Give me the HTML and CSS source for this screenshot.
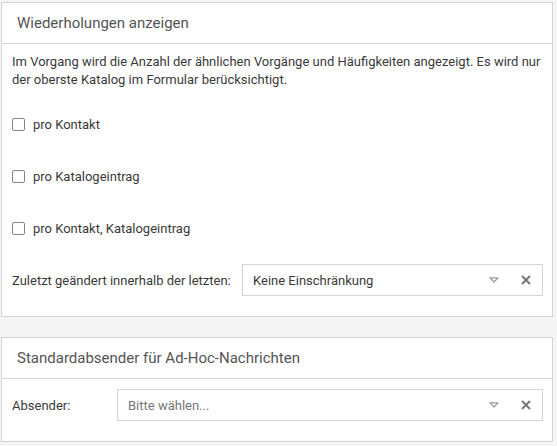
FILE: index.html
```html
<!DOCTYPE html>
<html lang="de">
<head>
<meta charset="utf-8">
<title>Einstellungen</title>
<link rel="stylesheet" href="styles.css">
</head>
<body>
<section class="panel">
  <div class="panel-head">Wiederholungen anzeigen</div>
  <div class="panel-body body-main">
    <p class="desc">Im Vorgang wird die Anzahl der ähnlichen Vorgänge und Häufigkeiten angezeigt. Es wird nur der oberste Katalog im Formular berücksichtigt.</p>
    <div class="checks">
      <label class="check"><input type="checkbox" class="box"><span>pro Kontakt</span></label>
      <label class="check"><input type="checkbox" class="box"><span>pro Katalogeintrag</span></label>
      <label class="check"><input type="checkbox" class="box"><span>pro Kontakt, Katalogeintrag</span></label>
    </div>
    <div class="field field-wide">
      <span class="field-label">Zuletzt geändert innerhalb der letzten:</span>
      <div class="select">
        <span class="select-value">Keine Einschränkung</span>
        <svg class="caret" width="10" height="6" viewBox="0 0 10 6"><path d="M1 0.8 H9 L5 5 Z" fill="none" stroke="#9a9a9a" stroke-width="1.2" stroke-linejoin="round"/></svg>
        <svg class="clear" width="10" height="10" viewBox="0 0 10 10"><path d="M1 1 L9 9 M9 1 L1 9" stroke="#777" stroke-width="2"/></svg>
      </div>
    </div>
  </div>
</section>
<section class="panel panel-second">
  <div class="panel-head">Standardabsender für Ad-Hoc-Nachrichten</div>
  <div class="panel-body body-short">
    <div class="field field-narrow">
      <span class="field-label">Absender:</span>
      <div class="select">
        <span class="select-value placeholder">Bitte wählen...</span>
        <svg class="caret" width="10" height="6" viewBox="0 0 10 6"><path d="M1 0.8 H9 L5 5 Z" fill="none" stroke="#9a9a9a" stroke-width="1.2" stroke-linejoin="round"/></svg>
        <svg class="clear" width="10" height="10" viewBox="0 0 10 10"><path d="M1 1 L9 9 M9 1 L1 9" stroke="#777" stroke-width="2"/></svg>
      </div>
    </div>
  </div>
</section>
</body>
</html>
```
FILE: styles.css
```css
html, body {
  margin: 0;
  padding: 0;
  background: #f5f5f5;
}
body {
  padding: 2px 5px 0 1px;
  font-family: Roboto, "Liberation Sans", Arial, sans-serif;
  font-size: 13px;
  color: #3a3a3a;
}
.panel {
  background: #fff;
  border: 1px solid #d4d4d4;
  width: 550px;
  box-sizing: content-box;
}
.panel-second {
  margin-top: 20px;
}
.panel-head {
  height: 40px;
  line-height: 40px;
  padding-left: 15px;
  font-size: 15px;
  color: #555;
  border-bottom: 1px solid #d4d4d4;
}
.panel-body {
  padding: 0 9px 20px 10px;
}
.body-main {
  padding-top: 9px;
}
.body-short {
  padding-top: 10px;
}
.desc {
  margin: 0;
  line-height: 18px;
}
.checks {
  display: flex;
  flex-direction: column;
  gap: 34px;
  margin-top: 26px;
}
.check {
  display: flex;
  align-items: center;
  height: 18px;
  gap: 8px;
}
.box {
  appearance: none;
  -webkit-appearance: none;
  margin: 0;
  width: 13px;
  height: 13px;
  border: 1px solid #858585;
  border-radius: 2px;
  background: #fff;
  box-sizing: border-box;
}
.field {
  display: flex;
  align-items: center;
}
.field-wide {
  margin-top: 27px;
}
.field-wide .field-label {
  width: 230px;
}
.field-narrow .field-label {
  width: 105px;
}
.select {
  flex: 1;
  height: 32px;
  box-sizing: border-box;
  border: 1px solid #d4d4d4;
  display: flex;
  align-items: center;
  padding: 0 11px 0 10px;
}
.select-value {
  flex: 1;
}
.placeholder {
  color: #777;
}
.caret {
  margin-right: 22px;
}
```
